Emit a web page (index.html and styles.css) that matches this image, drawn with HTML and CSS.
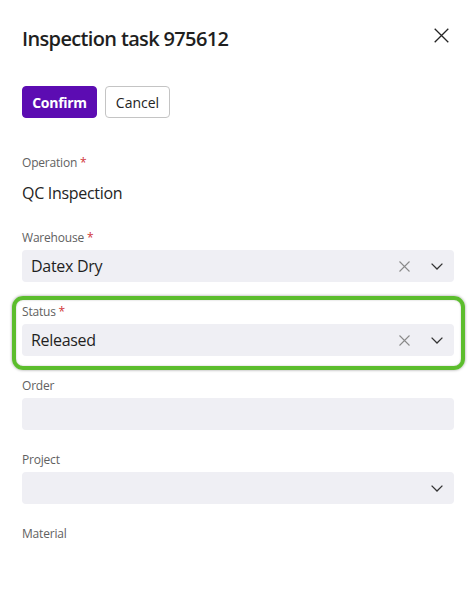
FILE: index.html
```html
<!DOCTYPE html>
<html>
<head>
<meta charset="utf-8">
<link rel="stylesheet" href="styles.css">
</head>
<body>
<div class="panel">
  <header class="head">
    <h1 class="title">Inspection task 975612</h1>
    <button class="close" aria-label="Close">
      <svg width="15" height="15" viewBox="0 0 15 15"><path d="M0.7 0.7 L14.3 14.3 M14.3 0.7 L0.7 14.3" stroke="#242424" stroke-width="1.3" fill="none"/></svg>
    </button>
  </header>
  <div class="actions">
    <button class="btn btn-primary">Confirm</button>
    <button class="btn btn-secondary">Cancel</button>
  </div>

  <div class="group group-static">
    <div class="label">Operation <span class="req">*</span></div>
    <div class="static">QC Inspection</div>
  </div>

  <div class="group">
    <div class="label">Warehouse <span class="req">*</span></div>
    <div class="field">
      <span class="value">Datex Dry</span>
      <span class="clear"><svg width="11" height="11" viewBox="0 0 11 11"><path d="M0.5 0.5 L10.5 10.5 M10.5 0.5 L0.5 10.5" stroke="#8a8a8a" stroke-width="1.1" fill="none"/></svg></span>
      <span class="chev"><svg width="12" height="7" viewBox="0 0 12 7"><path d="M0.6 0.6 L6 6 L11.4 0.6" stroke="#333" stroke-width="1.3" fill="none"/></svg></span>
    </div>
  </div>

  <div class="group highlighted">
    <div class="label">Status <span class="req">*</span></div>
    <div class="field">
      <span class="value">Released</span>
      <span class="clear"><svg width="11" height="11" viewBox="0 0 11 11"><path d="M0.5 0.5 L10.5 10.5 M10.5 0.5 L0.5 10.5" stroke="#8a8a8a" stroke-width="1.1" fill="none"/></svg></span>
      <span class="chev"><svg width="12" height="7" viewBox="0 0 12 7"><path d="M0.6 0.6 L6 6 L11.4 0.6" stroke="#333" stroke-width="1.3" fill="none"/></svg></span>
    </div>
  </div>

  <div class="group">
    <div class="label">Order</div>
    <div class="field"></div>
  </div>

  <div class="group">
    <div class="label">Project</div>
    <div class="field">
      <span class="value"></span>
      <span class="chev"><svg width="12" height="7" viewBox="0 0 12 7"><path d="M0.6 0.6 L6 6 L11.4 0.6" stroke="#333" stroke-width="1.3" fill="none"/></svg></span>
    </div>
  </div>

  <div class="group">
    <div class="label">Material</div>
  </div>
</div>
</body>
</html>
```

FILE: styles.css
```css
* { box-sizing: border-box; }
html, body { margin: 0; padding: 0; background: #fff; }
body {
  font-family: "Open Sans", "Noto Sans", "Liberation Sans", sans-serif;
  color: #242424;
  width: 476px;
  height: 590px;
  overflow: hidden;
}
.panel {
  padding: 25px 22px 0 22px;
}
.head {
  display: flex;
  justify-content: space-between;
  align-items: flex-start;
}
.title {
  margin: 0;
  font-size: 20px;
  line-height: 28px;
  font-weight: 600;
  color: #1f1f1f;
  letter-spacing: -0.65px;
}
.close {
  border: 0;
  background: none;
  padding: 0;
  margin: 3px 5px 0 0;
  width: 15px;
  height: 15px;
  display: flex;
}
.actions {
  display: flex;
  gap: 8px;
  margin-top: 33px;
}
.btn {
  height: 32px;
  border-radius: 4px;
  font-family: inherit;
  font-size: 14px;
  padding: 0;
  cursor: pointer;
}
.btn-primary {
  background: #5c0cb2;
  color: #fff;
  border: 1px solid #5c0cb2;
  font-weight: 700;
  width: 75px;
  letter-spacing: -0.3px;
}
.btn-secondary {
  background: #fff;
  color: #242424;
  border: 1px solid #c4c4c4;
  width: 65px;
}
.group {
  margin-top: 22px;
}
.group-static { margin-top: 37px; }
.group-static + .group { margin-top: 26px; }
.label {
  font-size: 12px;
  line-height: 16px;
  color: #616161;
  letter-spacing: -0.2px;
}
.req { color: #d13438; }
.static {
  font-size: 16px;
  line-height: 22px;
  margin-top: 11px;
  color: #242424;
  letter-spacing: -0.3px;
}
.field {
  margin-top: 4px;
  height: 32px;
  background: #efeff4;
  border-radius: 4px;
  display: flex;
  align-items: center;
  padding: 0 11px 0 9px;
}
.value {
  flex: 1;
  font-size: 16px;
  color: #1f1f1f;
  letter-spacing: -0.3px;
}
.clear {
  display: flex;
  margin-right: 21px;
  margin-top: 1px;
}
.chev {
  display: flex;
  margin-top: 1px;
}
.highlighted {
  position: relative;
}
.highlighted::after {
  content: "";
  position: absolute;
  left: -10px;
  right: -11px;
  top: -8px;
  bottom: -14px;
  border: 4px solid #5cbd2d;
  border-radius: 11px;
  box-shadow: 0 0 3px rgba(0,0,0,0.4), inset 0 0 2px rgba(0,0,0,0.25);
  pointer-events: none;
}
```
